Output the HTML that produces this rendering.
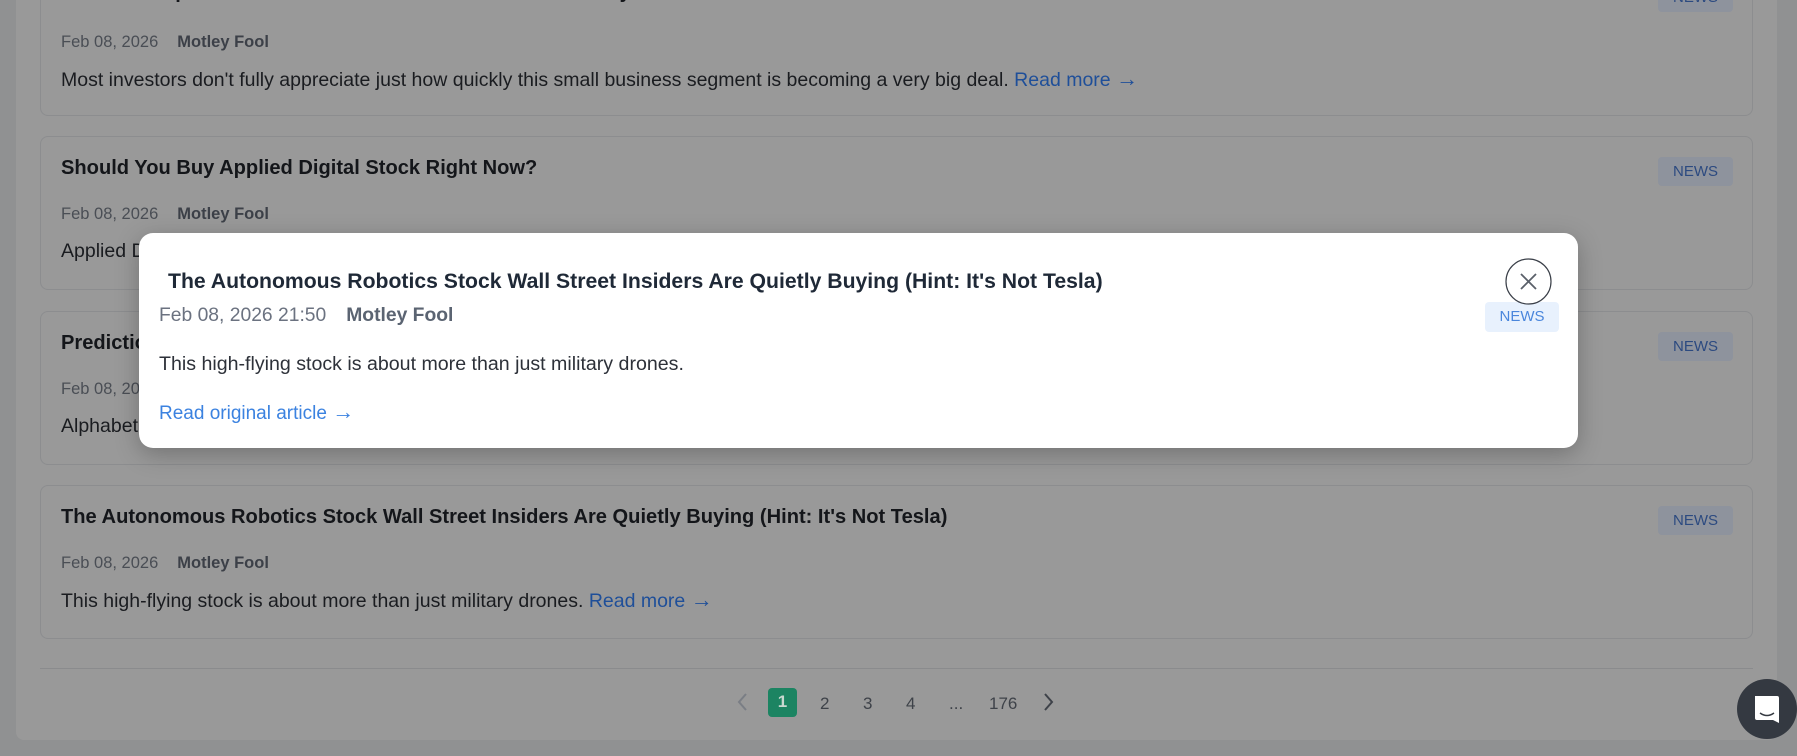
<!DOCTYPE html>
<html><head><meta charset="utf-8"><style>
*{margin:0;padding:0;box-sizing:border-box}
body{width:1797px;height:756px;overflow:hidden;background:#909192;font-family:"Liberation Sans",sans-serif;position:relative}
.panel{position:absolute;left:16px;top:-20px;width:1761px;height:760px;background:#999;border-radius:8px}
.card{position:absolute;left:40px;width:1713px;border:1px solid #8c8d8f;border-radius:8px;background:#999}
.card .t{position:absolute;left:20px;top:20px;font-size:20.1px;font-weight:bold;color:#14161a}
.card .m{position:absolute;left:20px;top:68px;font-size:16.5px;color:#4a4e55}
.card .m b{margin-left:19px;color:#3c4048}
.card .d{position:absolute;left:20px;top:103px;font-size:19.5px;color:#1a1c20}
.card .d a{color:#1f4f99;text-decoration:none}
.arr{font-size:22px;font-weight:bold;line-height:1}
.badge{position:absolute;right:19px;top:20px;width:75px;height:29px;background:#8e939d;border-radius:4px;color:#2c4a80;font-size:15px;text-align:center;line-height:29px}
.pg{position:absolute;top:690px;font-size:17px;color:#3e4249;line-height:28px}
.modal{position:absolute;left:139px;top:233px;width:1439px;height:215px;background:#fff;border-radius:14px;box-shadow:0 6px 24px rgba(0,0,0,.25)}
</style></head><body>
<div class="panel"></div>
<div class="card" style="top:-30px;height:146px">
<div class="t" style="top:10px">1 Reason Alphabet Stock Could Deliver Massive Returns by 2027</div>
<div class="m" style="top:62px">Feb 08, 2026<b>Motley Fool</b></div>
<div class="d" style="top:97px">Most investors don't fully appreciate just how quickly this small business segment is becoming a very big deal. <a>Read more <span class="arr">→</span></a></div>
<div class="badge" style="top:12px">NEWS</div></div>
<div class="card" style="top:136px;height:154px">
<div class="t">Should You Buy Applied Digital Stock Right Now?</div>
<div class="m">Feb 08, 2026<b>Motley Fool</b></div>
<div class="d">Applied Digital stock</div>
<div class="badge">NEWS</div></div>
<div class="card" style="top:311px;height:154px">
<div class="t">Prediction: Alphabet</div>
<div class="m">Feb 08, 2026<b>Motley Fool</b></div>
<div class="d">Alphabet</div>
<div class="badge">NEWS</div></div>
<div class="card" style="top:485px;height:154px">
<div class="t">The Autonomous Robotics Stock Wall Street Insiders Are Quietly Buying (Hint: It's Not Tesla)</div>
<div class="m">Feb 08, 2026<b>Motley Fool</b></div>
<div class="d">This high-flying stock is about more than just military drones. <a>Read more <span class="arr">→</span></a></div>
<div class="badge">NEWS</div></div>
<div style="position:absolute;left:40px;top:668px;width:1713px;height:1px;background:#8a8b8d"></div>
<svg style="position:absolute;left:736px;top:692px" width="14" height="20"><path d="M10 2 L3 10 L10 18" stroke="#7a7e85" stroke-width="2" fill="none"/></svg>
<div class="pg" style="left:768px;width:29px;height:29px;background:#1c8462;border-radius:4px;color:#c8d8d0;text-align:center;font-weight:bold;top:688px">1</div>
<div class="pg" style="left:820px">2</div>
<div class="pg" style="left:863px">3</div>
<div class="pg" style="left:906px">4</div>
<div class="pg" style="left:949px">...</div>
<div class="pg" style="left:989px">176</div>
<svg style="position:absolute;left:1041px;top:692px" width="14" height="20"><path d="M4 2 L11 10 L4 18" stroke="#3e4249" stroke-width="2" fill="none"/></svg>
<div class="modal">
<div style="position:absolute;left:29px;top:37px;font-size:21.2px;font-weight:bold;color:#1f2937">The Autonomous Robotics Stock Wall Street Insiders Are Quietly Buying (Hint: It's Not Tesla)</div>
<div style="position:absolute;left:20px;top:72px;font-size:19.3px;color:#6b7280">Feb 08, 2026 21:50<b style="margin-left:20px;color:#5b6472">Motley Fool</b></div>
<div style="position:absolute;left:20px;top:120px;font-size:19.6px;color:#2d3139">This high-flying stock is about more than just military drones.</div>
<div style="position:absolute;left:20px;top:168px;font-size:19px;color:#3b82e0">Read original article <span class="arr">→</span></div>
<div style="position:absolute;left:1346px;top:69px;width:74px;height:30px;background:#e8f1fd;border-radius:4px;color:#4a86dc;font-size:15px;text-align:center;line-height:30px">NEWS</div>
<svg style="position:absolute;left:1366px;top:25px" width="47" height="47"><circle cx="23.5" cy="23.5" r="22.5" fill="#fff" stroke="#3a3f48" stroke-width="1.2"/><path d="M16 16 L31 31 M31 16 L16 31" stroke="#5a606a" stroke-width="1.8"/></svg>
</div>
<svg style="position:absolute;left:1737px;top:678px" width="60" height="62"><circle cx="30" cy="31" r="30" fill="#343941"/><path d="M18 18 h22 a2 2 0 0 1 2 2 v25 l-6 -3 h-16 a2 2 0 0 1 -2 -2 z" fill="#fff"/><path d="M23 35 q7 5 14 0" stroke="#343941" stroke-width="1.5" fill="none"/></svg>
</body></html>
